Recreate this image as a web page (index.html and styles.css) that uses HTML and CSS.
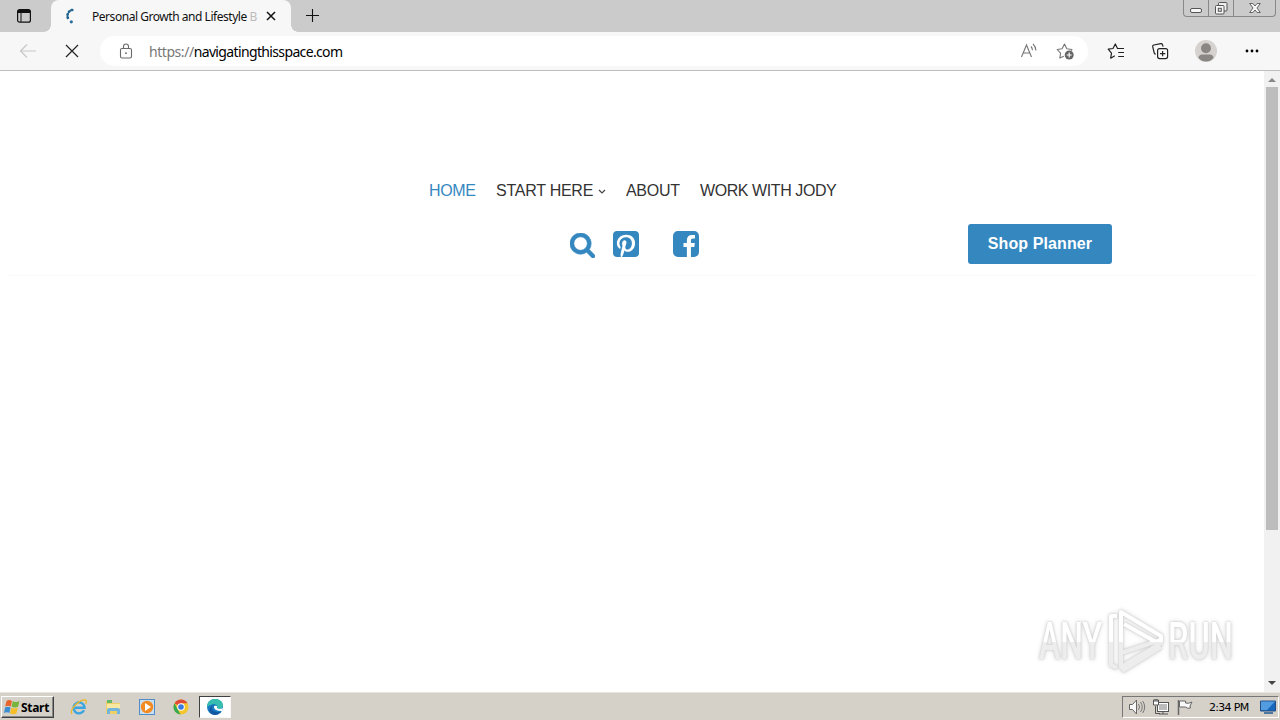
FILE: index.html
```html
<!DOCTYPE html>
<html lang="en">
<head>
<meta charset="utf-8">
<title>Personal Growth and Lifestyle Blog</title>
<link rel="stylesheet" href="styles.css">
</head>
<body>
<div class="screen">
  <header class="tabs">
    <svg class="tab-actions" viewBox="0 0 16 16"><rect x="1.6" y="1.6" width="12.8" height="12.6" rx="2" fill="none" stroke="#111" stroke-width="1.2"/><path d="M2 2h12v3H2z" fill="#111"/><path d="M5 4v10" stroke="#111"/></svg>
    <div class="tab">
      <svg class="spinner" viewBox="0 0 16 16"><path d="M7.500 2h.8M5 3.700l.5-.4M3.500 6.700l.3-.7M3.600 9.200l.3.700" fill="none" stroke="#23648f" stroke-width="2.600" stroke-linecap="round"/><circle cx="7.300" cy="13.800" r="1.600" fill="#2d71a0"/></svg>
      <span class="tab-title">Personal Growth and Lifestyle <i>B</i></span>
      <svg class="tab-close" viewBox="0 0 10 10"><path d="M1 1l8 8M9 1L1 9" stroke="#111" stroke-width="1.500"/></svg>
    </div>
    <svg class="new-tab" viewBox="0 0 15 15"><path d="M7.500 1v13M1 7.500h13" stroke="#111" stroke-width="1.1"/></svg>
    <div class="window-buttons">
      <span class="wb minimize"><svg viewBox="0 0 16 16"><rect x="2.500" y="8.500" width="11" height="4" rx="1.500" fill="#f7f7f7" stroke="#555"/></svg></span>
      <span class="wb restore"><svg viewBox="0 0 16 16"><rect x="5.500" y="2.500" width="8.500" height="8.500" rx="1" fill="#eee" stroke="#555"/><rect x="2.500" y="5.500" width="8.500" height="8.500" rx="1" fill="#f7f7f7" stroke="#555"/><rect x="5.300" y="8.300" width="3" height="3" fill="#ddd" stroke="#555"/></svg></span>
      <span class="wb close"><svg viewBox="0 0 16 16"><path d="M2.700 3.500h3.200L8 6l2.100-2.500h3.200L10 8l3.300 4.500h-3.200L8 10l-2.100 2.500H2.700L6 8z" fill="#f7f7f7" stroke="#555" stroke-width=".9"/></svg></span>
    </div>
  </header>

  <div class="toolbar">
    <svg class="back" viewBox="0 0 18 16"><path d="M8 1.500L1.500 8 8 14.500M1.500 8H17" fill="none" stroke="#c8c8c8" stroke-width="1.2"/></svg>
    <svg class="stop" viewBox="0 0 14 14"><path d="M1 1l12 12M13 1L1 13" stroke="#222" stroke-width="1.2"/></svg>
    <div class="address">
      <svg class="lock" viewBox="0 0 14 16"><rect x="1.500" y="5.500" width="11" height="9.500" rx="1.500" fill="none" stroke="#6a6a6a" stroke-width="1.1"/><path d="M4.500 5.500V3.500a2.500 2.500 0 0 1 5 0v2" fill="none" stroke="#6a6a6a" stroke-width="1.1"/><circle cx="7" cy="10.200" r=".9" fill="#666"/></svg>
      <span class="url"><span class="scheme">https://</span><span class="host">navigatingthisspace.com</span></span>
      <svg class="read-aloud" viewBox="0 0 18 18"><path d="M1.500 15L6.500 3l5 12M3.300 11h6.500M11 4.500q1.400 1.500 1.400 3.700M13 2q2.700 2.500 2.900 6.500" fill="none" stroke="#757575" stroke-width="1.100"/></svg>
      <svg class="add-fav" viewBox="0 0 18 18"><path d="M7.800 14.200l-4 1.900.8-4.900L1.200 7.500l4.900-.8L8.500 2l2.300 4.700 5.200.8-1 1" fill="none" stroke="#777" stroke-width="1.100" stroke-linejoin="round"/><circle cx="13.200" cy="13" r="4.500" fill="#666"/><path d="M10.700 13h5M13.200 10.500v5" stroke="#fff" stroke-width="1.100"/></svg>
    </div>
    <svg class="favorites" viewBox="0 0 18 18"><path d="M7.800 13.700l-4.100 2.500.8-5.100L1.200 7.200l4.800-.7L8.300 2l2.200 4.500H17M11.200 10.500H17M11.200 14.500H17" fill="none" stroke="#222" stroke-width="1.200" stroke-linejoin="round"/></svg>
    <svg class="collections" viewBox="0 0 18 18"><rect x="6.600" y="6.600" width="10" height="10" rx="2" fill="none" stroke="#222" stroke-width="1.200"/><path d="M9 11.600h5.300M11.600 9v5.300M4.500 12.500L3.200 11 1.700 4.700q-.3-1.400 1.200-1.700l6.800-1.300q1.300-.2 1.800 1l.6 2" fill="none" stroke="#222" stroke-width="1.200"/></svg>
    <svg class="profile" viewBox="0 0 22 22"><circle cx="11" cy="11" r="11" fill="#d5d2cf"/><circle cx="11" cy="8.200" r="5" fill="#8a8683"/><path d="M3.500 18q0-3.500 4-3.500h7q4 0 4 3.500-3 3.500-7.500 3.500T3.500 18z" fill="#8a8683"/></svg>
    <svg class="more" viewBox="0 0 14 4"><circle cx="2" cy="2" r="1.400"/><circle cx="7" cy="2" r="1.400"/><circle cx="12" cy="2" r="1.400"/></svg>
  </div>

  <div class="viewport">
    <main class="page">
      <nav class="menu">
        <a class="home">HOME</a>
        <a class="start">START HERE</a>
        <svg class="chevron" viewBox="0 0 8 6"><path d="M1 1l3 3 3-3" fill="none" stroke="#444" stroke-width="1.200"/></svg>
        <a class="about">ABOUT</a>
        <a class="work">WORK WITH JODY</a>
      </nav>
      <div class="actions">
        <svg class="search" viewBox="64 128 1664 1664"><path stroke="#3587bf" stroke-width="40" d="M1216 832q0-185-131.500-316.500t-316.500-131.500-316.500 131.500-131.500 316.500 131.500 316.500 316.500 131.500 316.500-131.500 131.500-316.500zm512 832q0 52-38 90t-90 38q-54 0-90-38l-343-342q-179 124-399 124-143 0-273.500-55.500t-225-150-150-225-55.500-273.500 55.500-273.500 150-225 225-150 273.500-55.500 273.500 55.500 225 150 150 225 55.500 273.500q0 220-124 399l343 343q37 37 37 90z"/></svg>
        <svg class="pinterest" viewBox="0 32 448 448"><path d="M448 80v352c0 26.500-21.500 48-48 48H154.400c9.800-16.400 22.400-40 27.400-59.300 3-11.500 15.300-58.400 15.300-58.400 8 15.300 31.400 28.200 56.300 28.200 74.100 0 127.400-68.100 127.400-152.700 0-81.100-66.200-141.800-151.400-141.800-106 0-162.200 71.100-162.200 148.600 0 36 19.200 80.800 49.800 95.100 4.700 2.200 7.100 1.200 8.200-3.300.8-3.400 5-20.100 6.800-27.800.6-2.500.3-4.600-1.700-7-10.100-12.300-18.300-34.900-18.300-56 0-54.200 41-106.600 110.900-106.600 60.300 0 102.600 41.100 102.600 99.900 0 66.400-33.500 112.400-77.200 112.400-24.100 0-42.100-19.900-36.400-44.400 6.900-29.200 20.300-60.700 20.300-81.800 0-53-75.500-45.700-75.500 25 0 21.700 7.300 36.500 7.300 36.500-31.400 132.800-36.100 134.500-29.600 192.600l2.200.8H48c-26.500 0-48-21.500-48-48V80c0-26.500 21.500-48 48-48h352c26.500 0 48 21.500 48 48z"/></svg>
        <svg class="facebook" viewBox="128 128 1536 1536"><path d="M1376 128q119 0 203.500 84.500t84.500 203.500v960q0 119-84.500 203.500t-203.500 84.500h-188v-595h199l30-232h-229v-148q0-56 23.500-84t91.500-28l122-1v-207q-63-9-178-9-136 0-217.500 80t-81.500 226v171h-200v232h200v595h-532q-119 0-203.500-84.500t-84.500-203.500v-960q0-119 84.500-203.500t203.500-84.500h960z"/></svg>
        <a class="shop"><span>Shop Planner</span></a>
      </div>
    </main>
    <div class="scrollbar">
      <svg class="arrow" viewBox="0 0 8 4"><path d="M0 4l4-4 4 4z" fill="#888"/></svg>
      <div class="thumb"></div>
      <svg class="arrow" viewBox="0 0 8 4"><path d="M0 0l4 4 4-4z" fill="#444"/></svg>
    </div>
    <svg class="watermark" viewBox="0 0 214 74">
      <defs><linearGradient id="fade" x1="0" y1="0" x2="0" y2="74" gradientUnits="userSpaceOnUse"><stop offset=".51" stop-color="#fff"/><stop offset=".51" stop-color="#ededed"/></linearGradient></defs>
      <g fill="url(#fade)">
        <text x="9" y="55" textLength="63" lengthAdjust="spacingAndGlyphs">ANY</text>
        <text x="138" y="55" textLength="65" lengthAdjust="spacingAndGlyphs">RUN</text>
      </g>
      <g fill="none" stroke="url(#fade)" stroke-width="4" stroke-linejoin="round">
        <path d="M87 12h-6v49l6 3"/><path d="M91 8l40 24v7L91 63V8zM94 20l32 18M91 49l40-13M92 67l39-24"/>
      </g>
    </svg>
  </div>

  <footer class="taskbar">
    <div class="start-button">
      <svg viewBox="0 0 16 16"><path d="M2.500 2Q5 .2 8 2L6.800 7.500Q4 6 1.200 7.500z" fill="#e9642b"/><path d="M8.800 2.300Q12 4 15.500 2l-1.500 5.700Q11 9.300 7.600 7.800z" fill="#76b43b"/><path d="M1 8.500q3-1.500 5.600 0L5.400 14Q3 12.500 0 14z" fill="#3d8ed0"/><path d="M7.400 8.800q3 1.500 6.400 0L12.400 14.500q-3 1.500-6.400 0z" fill="#f5bd27"/></svg>
      <b>Start</b>
    </div>
    <svg class="app ie" viewBox="0 0 18 18"><path d="M14 12.300A5.500 5.500 0 1 1 14.500 9v.7H5" fill="none" stroke="#3ba5df" stroke-width="2.400"/><path d="M2 16C-1 12 9 1.500 15 2q2.500.5.500 4" fill="none" stroke="#e8b92f" stroke-width="1.300"/></svg>
    <svg class="app explorer" viewBox="0 0 18 18"><path d="M2 3h6l1 2h7v11H2z" fill="#efcf67"/><path d="M3 2h5v3H3z" fill="#65b56b"/><path d="M3 6h13v5H3z" fill="#f9e8a1"/><path d="M3 16v-4q0-2 2-2h9q2 0 2 2v4h-3v-3H6v3z" fill="#72b5dd"/></svg>
    <svg class="app media" viewBox="0 0 18 18"><rect x="1.500" y="1.500" width="15" height="15" fill="#c9dff1" stroke="#538dc5"/><circle cx="9" cy="9" r="6.200" fill="#f18b22"/><path d="M7 5l6 4-6 4z" fill="#fff"/></svg>
    <svg class="app chrome" viewBox="0 0 18 18"><circle cx="9" cy="9" r="7.500" fill="#f5c52d"/><path d="M9 9L2.500 5.200a7.500 7.500 0 0 1 13 0H9z" fill="#df4937"/><path d="M2.500 5.200L6 12l2.500 4.500a7.500 7.500 0 0 1-6-11.300z" fill="#34a853"/><circle cx="9" cy="9" r="3.800" fill="#fff"/><circle cx="9" cy="9" r="2.800" fill="#397be0"/></svg>
    <div class="active-app">
      <svg class="edge" viewBox="0 0 18 18"><circle cx="9" cy="9" r="8" fill="#157ac2"/><path d="M1 9C1-1.500 17-1.500 17 7.500c0 3-3 4.500-6 3.500 2-3-2-6-5-4.500Q3 7 1 9z" fill="#36bdb0"/><path d="M7 7c-3 4 0 8 8 7q-5 5-10 1.500Q1 11 7 7z" fill="#1556a0"/><path d="M8 8q-1 5 8 5l1-3q-4 2-6 0 1-3-3-2z" fill="#fff"/></svg>
    </div>
    <div class="tray">
      <svg class="volume" viewBox="0 0 18 18"><path d="M1.500 6.500h3L8.500 2v14l-4-4.500h-3z" fill="#f7f7f7" stroke="#666"/><path d="M10.500 6q2 3 0 6M12.500 4q3.500 5 0 10M14.700 3q4 6 0 12" fill="none" stroke="#777"/></svg>
      <svg class="network" viewBox="0 0 18 18"><rect x="5.500" y="4.500" width="11" height="9" fill="#fff" stroke="#555"/><path d="M7 6h8v6H7z" fill="#bbb"/><path d="M7 16h9M11 14v2M3.500 8v7.500H8" fill="none" stroke="#555"/><path d="M1.500 2v5h5V2zM3 1v3M5 1v3" fill="#fff" stroke="#555"/></svg>
      <svg class="flag" viewBox="0 0 18 18"><path d="M2.500 2v15" stroke="#666" stroke-width="1.500"/><path d="M3.500 3h6v2q3 1 6.500-1l-2 4 .5 2q-3 1-5-1h-6z" fill="#f8f8f8" stroke="#666"/></svg>
      <span class="clock">2:34 PM</span>
      <svg class="desktop" viewBox="0 0 18 16"><path d="M1.500 2h15v10h-15z" fill="#1768bd" stroke="#244f85"/><path d="M2 2.500h14L8 11H2z" fill="#539ce0"/><path d="M5 14h9" stroke="#50789e" stroke-width="2"/></svg>
    </div>
  </footer>
</div>
</body>
</html>
```
FILE: styles.css
```css
* { box-sizing: border-box; }
body { margin: 0; background: #fff; font-family: "Liberation Sans", sans-serif; }
svg { display: block; flex: none; }
.screen { width: 1280px; height: 720px; display: flex; flex-direction: column; overflow: hidden; }

.tabs { height: 32px; background: #cbcbcb; display: flex; align-items: flex-start; flex: none; }
.tab-actions { width: 16px; height: 16px; margin: 8px 19px 0 16px; }
.tab { width: 240px; height: 32px; background: #f7f7f7; border-radius: 8px 8px 0 0; display: flex; align-items: center; position: relative; }
.tab::before, .tab::after { content: ""; position: absolute; bottom: 0; width: 7px; height: 7px; }
.tab::before { left: -7px; background: radial-gradient(circle at 0 0, #cbcbcb 6.500px, #f7f7f7 7px); }
.tab::after { right: -7px; background: radial-gradient(circle at 100% 0, #cbcbcb 6.500px, #f7f7f7 7px); }
.spinner { width: 16px; height: 16px; margin-left: 13px; }
.tab-title { width: 167px; margin-left: 12px; font: 12px "Noto Sans", sans-serif; letter-spacing: -.46px; color: #111; white-space: nowrap; }
.tab-title i { font-style: normal; color: #bbb; }
.tab-close { width: 10px; height: 10px; margin-left: 7px; }
.new-tab { width: 15px; height: 15px; margin: 8px 0 0 14px; }
.window-buttons { width: 93px; height: 17px; margin: 0 4px 0 auto; border: 1px solid #888; border-top: 0; border-radius: 0 0 4px 4px; display: flex; }
.wb { display: flex; justify-content: center; align-items: center; border-right: 1px solid #888; }
.wb svg { width: 16px; height: 16px; }
.minimize { width: 25px; }
.restore { width: 25px; }
.close { flex: 1; border: 0; }

.toolbar { height: 39px; flex: none; display: flex; align-items: center; background: #f7f7f7; border-bottom: 1px solid #bdbdbd; }
.back { width: 18px; height: 16px; margin-left: 19px; }
.stop { width: 14px; height: 14px; margin-left: 28px; }
.address { width: 988px; height: 30px; margin-left: 21px; padding-left: 19px; border-radius: 15px; background: #fff; display: flex; align-items: center; }
.lock { width: 14px; height: 16px; }
.url { margin-left: 16px; font: 14px "Noto Sans", sans-serif; letter-spacing: -.64px; color: #000; white-space: nowrap; }
.scheme { color: #777; letter-spacing: -.45px; }
.read-aloud { width: 18px; height: 18px; margin-left: auto; }
.add-fav { width: 18px; height: 18px; margin: 0 14px 0 18px; }
.favorites { width: 18px; height: 18px; margin-left: 19px; }
.collections { width: 18px; height: 18px; margin-left: 26px; }
.profile { width: 22px; height: 22px; margin-left: 26px; }
.more { width: 14px; height: 4px; margin-left: 28px; }

.viewport { height: 621px; flex: none; display: flex; position: relative; }
.page { width: 1264px; padding-top: 108px; }
.menu { height: 24px; display: flex; align-items: center; padding-left: 429px; font-size: 16px; color: #333; white-space: nowrap; }
.home { width: 67px; color: #3587bf; letter-spacing: -.4px; }
.start { width: 102px; letter-spacing: -.25px; }
.chevron { width: 8px; height: 6px; margin: 2px 20px 0 0; }
.about { width: 74px; letter-spacing: -.3px; }
.work { letter-spacing: -.42px; }
.actions { height: 73px; margin: 0 8px; padding: 21px 144px 0 562px; border-bottom: 1px solid #f9f9f9; display: flex; align-items: flex-start; }
.actions svg { width: 26px; height: 26px; fill: #3587bf; }
.actions .search { width: 25px; height: 25px; margin: 9px 1px 0 0; }
.pinterest { margin: 7px 0 0 17px; border-radius: 4px; }
.facebook { margin: 7px 0 0 34px; }
.shop { width: 144px; height: 40px; margin-left: auto; display: flex; align-items: center; justify-content: center; background: #3587bf; border-radius: 3px; color: #fff; font-size: 16px; font-weight: bold; letter-spacing: .1px; white-space: nowrap; }
.scrollbar { width: 16px; background: #f1f1f1; display: flex; flex-direction: column; align-items: center; justify-content: space-between; padding: 7px 0; }
.arrow { width: 8px; height: 4px; }
.thumb { width: 12px; height: 443px; margin: 5px 0 auto; background: #bdbdbd; }
.watermark { position: absolute; left: 1030px; top: 533px; width: 214px; height: 74px; overflow: visible; font: 500 52px Roboto, sans-serif; filter: drop-shadow(0 0 1px #c8c8c8) drop-shadow(0 0 2px #ddd); }

.taskbar { height: 28px; flex: none; display: flex; align-items: center; background: #d5d1c9; border-top: 1px solid #e8e5df; padding-top: 1px; }
.start-button { width: 53px; height: 22px; margin-left: 1px; display: flex; align-items: center; gap: 1px; padding-left: 2px; border: 1px solid; border-color: #fff #404040 #404040 #fff; box-shadow: inset -1px -1px #888; }
.start-button svg { width: 16px; height: 16px; }
.start-button b { font: bold 12px "Noto Sans", sans-serif; letter-spacing: -.3px; }
.app { width: 18px; height: 18px; }
.ie { margin-left: 16px; }
.explorer, .media, .chrome { margin-left: 16px; }
.active-app { width: 32px; height: 22px; margin-left: 9px; display: flex; align-items: center; justify-content: center; background: #fff; border: 1px solid; border-color: #404040 #f8f8f8 #f8f8f8 #404040; }
.edge { width: 18px; height: 18px; }
.tray { width: 157px; height: 22px; margin: 0 1px 0 auto; padding-left: 5px; display: flex; align-items: center; border: 1px solid; border-color: #777 #fff #fff #777; }
.volume, .network, .flag { width: 18px; height: 18px; }
.network, .flag { margin-left: 6px; }
.clock { width: 41px; margin-left: 15px; font: 11px "DejaVu Sans", sans-serif; letter-spacing: -.7px; white-space: nowrap; }
.desktop { width: 18px; height: 16px; margin-left: 9px; }
```
